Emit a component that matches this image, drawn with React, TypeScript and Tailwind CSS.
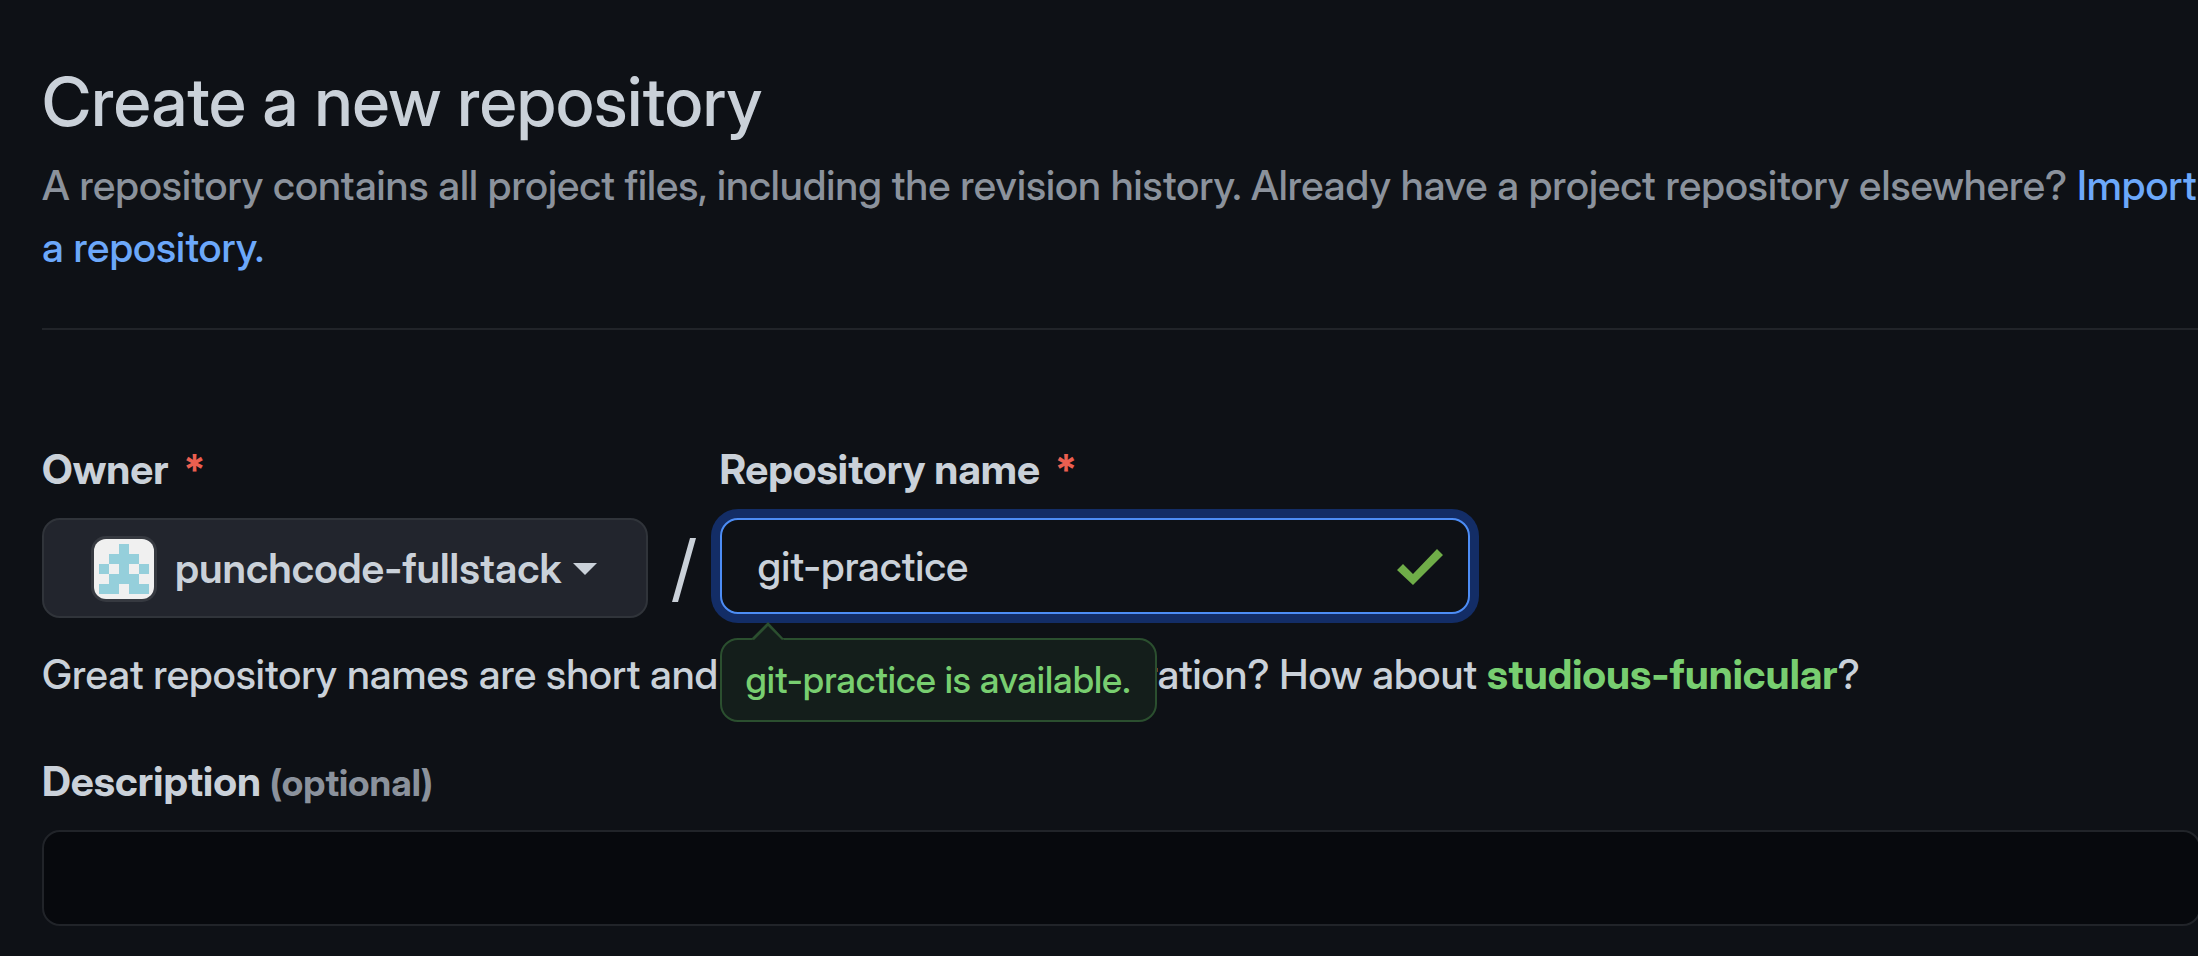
import { useState } from "react";

function Identicon() {
  return (
    <span className="block size-[66px] shrink-0 rounded-[15px] bg-[#363940] p-[3px]">
      <svg viewBox="0 0 60 60" className="block size-[60px] overflow-hidden rounded-[12px]" aria-hidden="true">
        <rect width="60" height="60" fill="#f0f0f0" />
        <path
          fill="#95cfdb"
          d="M25 5h10v10h10v10h10v10H45v10h10v10H35V45H25v10H5V45h10V35H5V25h10V15h10z"
        />
        <path fill="#f0f0f0" d="M15 25h10v10H15zM35 25h10v10H35z" />
      </svg>
    </span>
  );
}

function Required() {
  return <span className="ml-[15px] text-[#eb5f50]">*</span>;
}

export default function App() {
  const [name, setName] = useState("git-practice");
  const [description, setDescription] = useState("");

  return (
    <main
      className="min-h-screen overflow-x-clip bg-[#0e1116] pb-[30px] pl-[42px] text-[41px] leading-[62px] font-medium text-[#cad1d9]"
      style={{ fontFamily: '"Inter Display", Inter, "Liberation Sans", sans-serif' }}
    >
      <header className="border-b-2 border-[#212429] pt-[48px] pb-[50px]">
        <h1 className="text-[68px] leading-[106px] font-medium">Create a new repository</h1>
        <p className="text-[#8b929c]">
          A repository contains all project files, including the revision history. Already have a project
          repository elsewhere?{" "}
          <a href="#import" className="text-[#6ca8fa]">
            Import a repository.
          </a>
        </p>
      </header>

      <form className="pt-[108px]" onSubmit={(event) => event.preventDefault()}>
        <div className="flex items-start">
          <div className="flex flex-col gap-[18px]">
            <label htmlFor="owner" className="font-bold">
              Owner
              <Required />
            </label>
            <button
              id="owner"
              type="button"
              aria-haspopup="menu"
              className="flex h-[100px] items-center rounded-[18px] border-2 border-[#30343a] bg-[#22252d] pt-[2px] pr-[49px] pl-[47px] font-semibold"
            >
              <Identicon />
              <span className="ml-[18px] pb-[3px]">punchcode-fullstack</span>
              <svg viewBox="0 0 24 12" className="ml-[11px] h-[12px] w-[24px]" aria-hidden="true">
                <path d="M0 0h24L12 12z" fill="#cad1d9" />
              </svg>
            </button>
          </div>

          <span className="mt-[80px] flex h-[100px] w-[72px] items-center justify-center pt-[4px]" aria-hidden="true">
            <svg viewBox="0 0 26 64" className="h-[64px] w-[26px]">
              <path d="M19 0h6L7 64H1z" fill="#cad1d9" />
            </svg>
          </span>

          <div className="flex flex-col gap-[18px]">
            <label htmlFor="repository-name" className="font-bold">
              Repository name
              <Required />
            </label>
            <div className="relative w-[750px]">
              <input
                id="repository-name"
                type="text"
                value={name}
                onChange={(event) => setName(event.target.value)}
                className="block h-[96px] w-full rounded-[18px] border-2 border-[#4d8df5] bg-[#0e1116] pr-[90px] pl-[36px] ring-[9px] ring-[#132d66] outline-none"
              />
              <svg viewBox="0 0 46 36" className="absolute top-[31px] right-[27px] h-[36px] w-[46px]" aria-hidden="true">
                <path d="M40 0l6 6-30 30L0 21l6-6 10 10z" fill="#6fad48" />
              </svg>
              <div
                role="status"
                className="absolute top-[120px] left-0 rounded-[18px] border-2 border-[#2b4f2f] bg-[#141e1b] px-[24px] py-[11px] text-[37px] leading-[58px] whitespace-nowrap text-[#78ce70]"
              >
                <svg viewBox="0 0 34 18" className="absolute -top-[18px] left-[29px] h-[18px] w-[34px]" aria-hidden="true">
                  <path d="M1 18L17 1L33 18z" fill="#141e1b" />
                  <path d="M0 17L17 0L33 17L31 18L17 4L3 18z" fill="#2b4f2f" />
                </svg>
                git-practice is available.
              </div>
            </div>
          </div>
        </div>

        <p className="mt-[25px]">
          Great repository names are short and memorable. Need inspiration? How about{" "}
          <strong className="font-bold text-[#78ce70]">studious-funicular</strong>?
        </p>

        <div className="-mr-[3px] mt-[45px] flex flex-col gap-[18px]">
          <label htmlFor="description" className="font-bold">
            Description <span className="text-[37px] leading-none text-[#8b929c]">(optional)</span>
          </label>
          <input
            id="description"
            type="text"
            value={description}
            onChange={(event) => setDescription(event.target.value)}
            className="block h-[96px] w-full rounded-[18px] border-2 border-[#212429] bg-[#07090d] px-[36px] outline-none"
          />
        </div>
      </form>
    </main>
  );
}
